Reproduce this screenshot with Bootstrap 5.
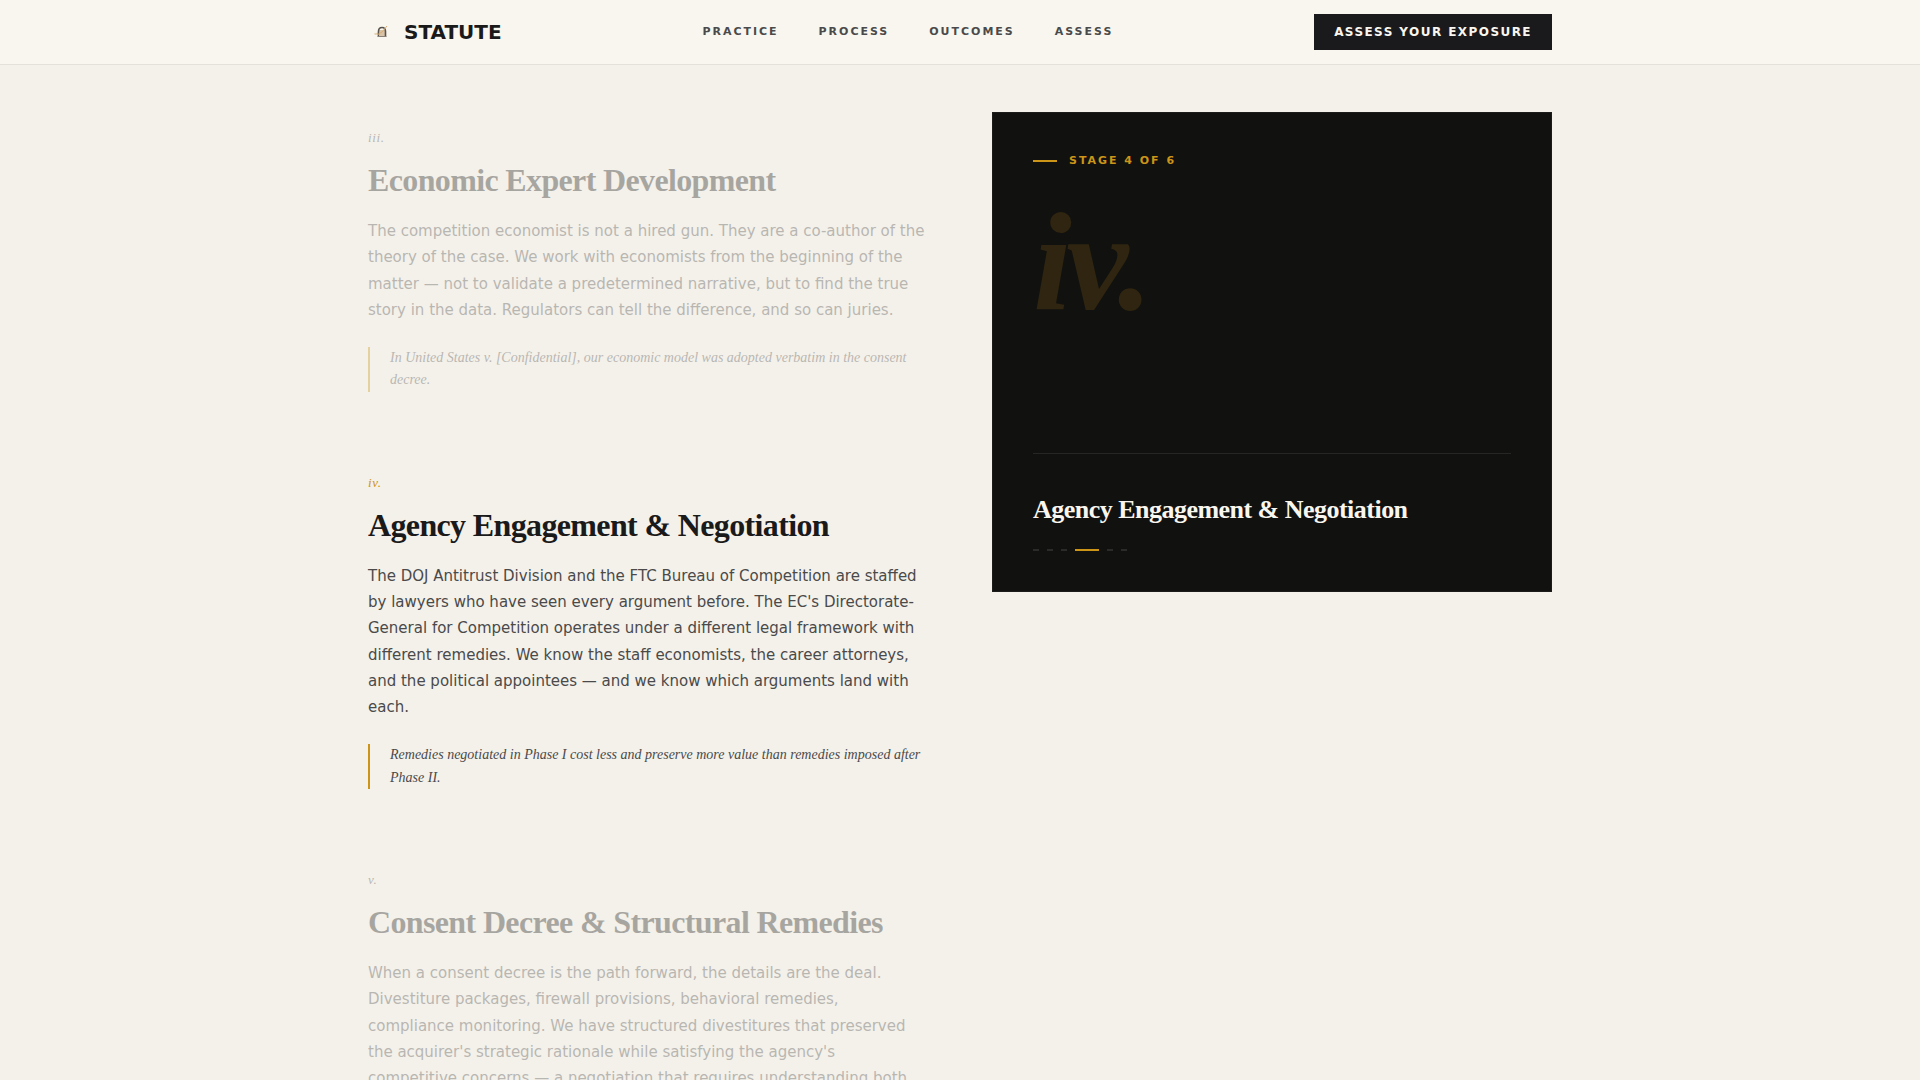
<!DOCTYPE html>
<html lang="en">
<head>
<meta charset="utf-8">
<meta name="viewport" content="width=device-width, initial-scale=1">
<title>Statute</title>
<link href="https://cdn.jsdelivr.net/npm/bootstrap@5.3.0/dist/css/bootstrap.min.css" rel="stylesheet">
<style>
:root { --ink: #1a1a1a; --paper: #f4f1ea; --gold: #cc9518; --soft: #4a4a4a; }
body { background: var(--paper); color: var(--ink); font-family: "DejaVu Sans", sans-serif; }
.shell { max-width: 1280px; padding-inline: 48px; }
.site-head { background: #f9f6ef; border-bottom: 1px solid #e4e1da; padding: 14px 0; }
.brand { color: var(--ink); font-size: 20px; line-height: 36px; font-weight: 700; }
.site-link { color: var(--soft); font-size: 11px; line-height: 16px; font-weight: 700; letter-spacing: 0.18em; }
.site-links { gap: 40px; }
.cta { --bs-btn-color: #f9f6ef; --bs-btn-bg: #1a1a1c; --bs-btn-border-color: #1a1a1c; --bs-btn-hover-color: #fff; --bs-btn-hover-bg: #333; --bs-btn-font-size: 12px; --bs-btn-font-weight: 700; --bs-btn-line-height: 18px; --bs-btn-padding-x: 19px; --bs-btn-padding-y: 8px; letter-spacing: 0.12em; }
.main-area { padding-top: 47px; }
.stages { --bs-gutter-x: 64px; }
.stage { padding: 15px 0 65px; }
.stage.dim { opacity: .35; }
.stage-no { font-family: "Liberation Serif", serif; font-style: italic; font-size: 13px; line-height: 21px; letter-spacing: 0.05em; margin-bottom: 12px; color: var(--soft); }
.active-stage .stage-no { color: var(--gold); }
.stage-title { font-family: "Liberation Serif", serif; font-weight: 700; font-size: 32px; line-height: 40px; letter-spacing: -0.02em; margin-bottom: 18px; }
.stage-text { font-size: 15px; line-height: 1.75; color: var(--soft); margin-bottom: 24px; }
.stage-quote { font-family: "Liberation Serif", serif; font-style: italic; font-size: 14px; line-height: 1.6; color: var(--soft); border-left: 2px solid var(--gold); padding-left: 20px; margin: 0; }
.panel { background: #11110f; border: 1px solid #1c1c1a; min-height: 480px; padding: 40px; top: 48px; }
.panel-label { color: var(--gold); font-size: 11px; line-height: 15px; font-weight: 700; letter-spacing: 0.18em; gap: 12px; }
.dash { width: 24px; height: 2px; background: var(--gold); }
.numeral { font-family: "Liberation Serif", serif; font-style: italic; font-weight: 700; font-size: 140px; line-height: 1; letter-spacing: -0.04em; color: #2f2510; margin-top: 24px; }
.panel-foot { border-top: 1px solid #262624; padding-top: 40px; }
.panel-title { font-family: "Liberation Serif", serif; font-weight: 700; font-size: 26px; line-height: 31px; letter-spacing: -0.02em; color: #f9f6ef; margin-bottom: 24px; }
.tick { width: 6px; height: 2px; background: #2b2b29; }
.tick.on { width: 24px; background: var(--gold); }
</style>
</head>
<body class="vh-100 overflow-hidden">
<header class="site-head">
  <div class="shell container-fluid d-flex align-items-center justify-content-between">
    <a class="brand d-flex align-items-center gap-2 text-decoration-none" href="#">
      <svg width="28" height="28" viewBox="0 0 28 28" aria-hidden="true">
        <path d="M11 12h6v7h-5z" fill="#d8c3a6"/>
        <path d="M6 15.500l4-1v2l-3 .5z" fill="#e6cdaa"/>
        <path d="M10.500 18.500v-5q0-4 3.500-4t3.500 4v5" fill="none" stroke="#57524c" stroke-width="1.600"/>
        <path d="M9.500 18.500h9" stroke="#8a8178" stroke-width="1"/>
        <path d="M9 17l5-3 5-6" stroke="#d9ab74" stroke-width="1" fill="none"/>
      </svg>
      <span>STATUTE</span>
    </a>
    <nav class="site-links d-flex" aria-label="Main">
      <a class="site-link text-decoration-none" href="#">PRACTICE</a>
      <a class="site-link text-decoration-none" href="#">PROCESS</a>
      <a class="site-link text-decoration-none" href="#">OUTCOMES</a>
      <a class="site-link text-decoration-none" href="#">ASSESS</a>
    </nav>
    <button class="cta btn rounded-0" type="button">ASSESS YOUR EXPOSURE</button>
  </div>
</header>
<main class="main-area">
  <div class="shell container-fluid">
    <div class="stages row">
      <div class="col-6">
        <section class="stage dim">
          <div class="stage-no">iii.</div>
          <h2 class="stage-title">Economic Expert Development</h2>
          <p class="stage-text">The competition economist is not a hired gun. They are a co-author of the theory of the case. We work with economists from the beginning of the matter — not to validate a predetermined narrative, but to find the true story in the data. Regulators can tell the difference, and so can juries.</p>
          <blockquote class="stage-quote">In United States v. [Confidential], our economic model was adopted verbatim in the consent decree.</blockquote>
        </section>
        <section class="stage active-stage">
          <div class="stage-no">iv.</div>
          <h2 class="stage-title">Agency Engagement &amp; Negotiation</h2>
          <p class="stage-text">The DOJ Antitrust Division and the FTC Bureau of Competition are staffed by lawyers who have seen every argument before. The EC's Directorate-General for Competition operates under a different legal framework with different remedies. We know the staff economists, the career attorneys, and the political appointees — and we know which arguments land with each.</p>
          <blockquote class="stage-quote">Remedies negotiated in Phase I cost less and preserve more value than remedies imposed after Phase II.</blockquote>
        </section>
        <section class="stage dim">
          <div class="stage-no">v.</div>
          <h2 class="stage-title">Consent Decree &amp; Structural Remedies</h2>
          <p class="stage-text">When a consent decree is the path forward, the details are the deal. Divestiture packages, firewall provisions, behavioral remedies, compliance monitoring. We have structured divestitures that preserved the acquirer's strategic rationale while satisfying the agency's competitive concerns — a negotiation that requires understanding both</p>
        </section>
      </div>
      <div class="col-6">
        <aside class="panel d-flex flex-column sticky-top rounded-0">
          <div class="panel-label d-flex align-items-center"><span class="dash"></span>STAGE 4 OF 6</div>
          <div class="numeral">iv.</div>
          <div class="panel-foot mt-auto">
            <h3 class="panel-title">Agency Engagement &amp; Negotiation</h3>
            <div class="d-flex gap-2">
              <span class="tick"></span><span class="tick"></span><span class="tick"></span><span class="tick on"></span><span class="tick"></span><span class="tick"></span>
            </div>
          </div>
        </aside>
      </div>
    </div>
  </div>
</main>
<script src="https://cdn.jsdelivr.net/npm/bootstrap@5.3.0/dist/js/bootstrap.bundle.min.js"></script>
</body>
</html>
